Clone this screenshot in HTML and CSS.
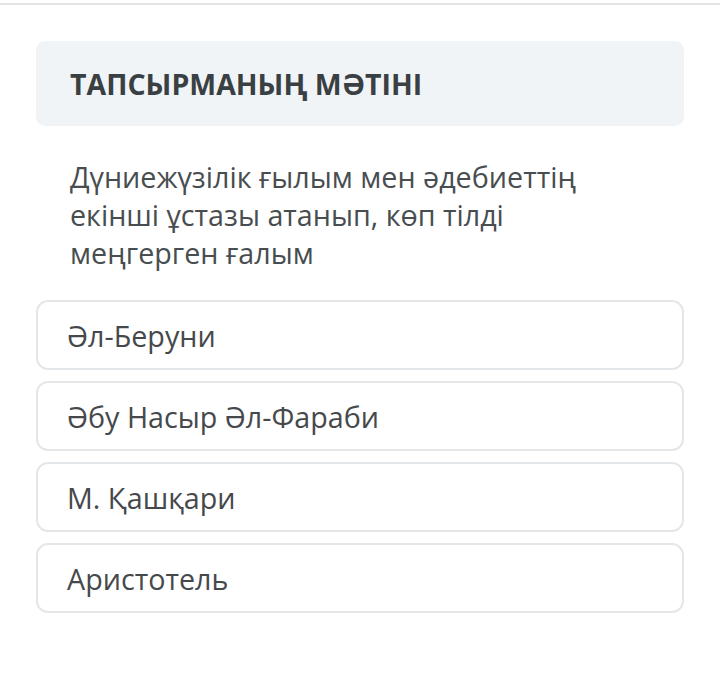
FILE: index.html
```html
<!DOCTYPE html>
<html lang="kk">
<head>
<meta charset="utf-8">
<link rel="stylesheet" href="styles.css">
</head>
<body>
<div class="topline"></div>
<main class="page">
  <div class="task-header">
    <h2 class="task-title">ТАПСЫРМАНЫҢ МӘТІНІ</h2>
  </div>
  <p class="question">Дүниежүзілік ғылым мен әдебиеттің екінші ұстазы атанып, көп тілді меңгерген ғалым</p>
  <ul class="options">
    <li class="option">Әл-Беруни</li>
    <li class="option">Әбу Насыр Әл-Фараби</li>
    <li class="option">М. Қашқари</li>
    <li class="option">Аристотель</li>
  </ul>
</main>
</body>
</html>
```
FILE: styles.css
```css
html, body {
  margin: 0;
  padding: 0;
  background: #ffffff;
}
body {
  font-family: "Open Sans", "Noto Sans", sans-serif;
  color: #44494c;
}
.topline {
  margin-top: 3px;
  height: 2px;
  background: #e4e4e4;
}
.page {
  padding: 36px 36px 0 36px;
}
.task-header {
  background: #f1f4f6;
  border-radius: 9px;
  height: 85px;
  display: flex;
  align-items: center;
  padding: 0 34px;
}
.task-title {
  margin: 0;
  font-size: 28.5px;
  font-weight: 700;
  color: #3a3f43;
}
.question {
  margin: 32px 0 0 0;
  padding: 0 34px;
  font-size: 28.7px;
  line-height: 38px;
  color: #484d50;
  max-width: 545px;
}
.options {
  list-style: none;
  margin: 28px 0 0 0;
  padding: 0;
  display: flex;
  flex-direction: column;
  gap: 11px;
}
.option {
  height: 70px;
  box-sizing: border-box;
  border: 2px solid #e4e7e9;
  border-radius: 12px;
  display: flex;
  align-items: center;
  padding: 0 29px;
  font-size: 28.7px;
  color: #46494c;
}
```
